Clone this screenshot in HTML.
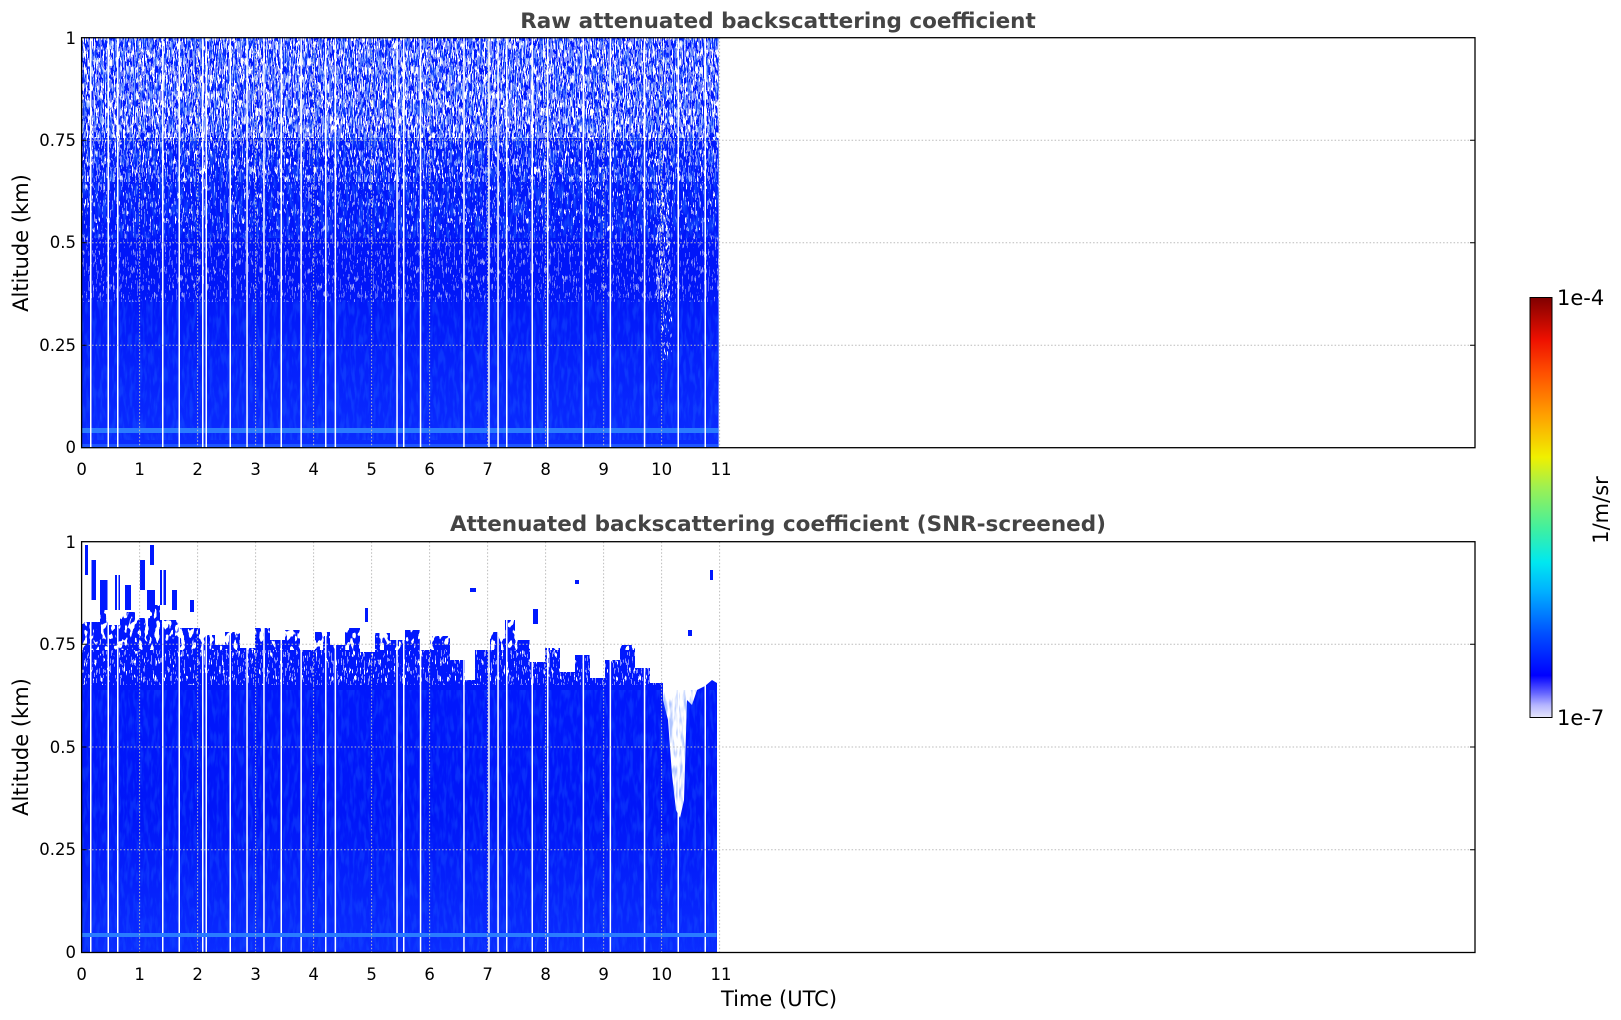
<!DOCTYPE html>
<html><head><meta charset="utf-8"><style>
html,body{margin:0;padding:0;background:#fff;width:1621px;height:1020px;overflow:hidden}
svg{display:block}
text{font-family:"DejaVu Sans","Liberation Sans",sans-serif}
</style></head><body>
<svg width="1621" height="1020" viewBox="0 0 1621 1020" xmlns="http://www.w3.org/2000/svg">
<defs>
<filter id="nd" x="0" y="0" width="100%" height="100%" color-interpolation-filters="sRGB">
<feTurbulence type="fractalNoise" baseFrequency="0.9 0.12" numOctaves="2" seed="3"/>
<feColorMatrix type="matrix" values="0 0 0 0 1 0 0 0 0 1 0 0 0 0 1 30 0 0 0 -14.7"/>
</filter>
<filter id="nm" x="0" y="0" width="100%" height="100%" color-interpolation-filters="sRGB">
<feTurbulence type="fractalNoise" baseFrequency="0.9 0.12" numOctaves="2" seed="7"/>
<feColorMatrix type="matrix" values="0 0 0 0 1 0 0 0 0 1 0 0 0 0 1 30 0 0 0 -17"/>
</filter>
<filter id="ns" x="0" y="0" width="100%" height="100%" color-interpolation-filters="sRGB">
<feTurbulence type="fractalNoise" baseFrequency="0.9 0.12" numOctaves="2" seed="11"/>
<feColorMatrix type="matrix" values="0 0 0 0 1 0 0 0 0 1 0 0 0 0 1 30 0 0 0 -19"/>
</filter>
<filter id="bm" x="0" y="0" width="100%" height="100%" color-interpolation-filters="sRGB">
<feTurbulence type="fractalNoise" baseFrequency="0.2 0.1" numOctaves="2" seed="9"/>
<feColorMatrix type="matrix" values="0 0 0 0 1 0 0 0 0 1 0 0 0 0 1 30 0 0 0 -16.5"/>
</filter>
<filter id="nb" x="0" y="0" width="100%" height="100%" color-interpolation-filters="sRGB">
<feTurbulence type="fractalNoise" baseFrequency="0.3 0.06" numOctaves="2" seed="5"/>
<feColorMatrix type="matrix" values="0 0 0 0 0.1 0 0 0 0 0.35 0 0 0 0 1 4 0 0 0 -1.8"/>
</filter>
<linearGradient id="base" x1="0" y1="0" x2="0" y2="1">
<stop offset="0" stop-color="#0018ff"/><stop offset="0.6" stop-color="#0016f8"/><stop offset="1" stop-color="#0a2cff"/>
</linearGradient>
<linearGradient id="cb" x1="0" y1="1" x2="0" y2="0">
<stop offset="0" stop-color="#e6e6fa"/><stop offset="0.03" stop-color="#b3b3ff"/><stop offset="0.06" stop-color="#6060ff"/>
<stop offset="0.1" stop-color="#0000ff"/><stop offset="0.2" stop-color="#0050ff"/><stop offset="0.3" stop-color="#00b0ff"/>
<stop offset="0.37" stop-color="#00e8f0"/><stop offset="0.45" stop-color="#40f0a0"/><stop offset="0.55" stop-color="#a0f050"/>
<stop offset="0.62" stop-color="#f0f000"/><stop offset="0.72" stop-color="#ffa000"/><stop offset="0.82" stop-color="#ff5000"/>
<stop offset="0.9" stop-color="#ee1000"/><stop offset="1" stop-color="#800000"/>
</linearGradient>
</defs>

<text x="778" y="28" text-anchor="middle" font-weight="bold" font-size="21.5" fill="#444">Raw attenuated backscattering coefficient</text>
<text x="778" y="531" text-anchor="middle" font-weight="bold" font-size="21.5" fill="#444">Attenuated backscattering coefficient (SNR-screened)</text>

<!-- TOP PLOT -->
<g>
<rect x="81.6" y="37.7" width="637" height="410" fill="url(#base)"/>
<rect x="81.6" y="37.7" width="637" height="100" fill="#fff" filter="url(#nd)"/>
<rect x="81.6" y="137" width="637" height="45" fill="#fff" filter="url(#nm)"/>
<rect x="81.6" y="182" width="637" height="50" fill="#fff" filter="url(#ns)"/>
<rect x="81.6" y="232" width="637" height="70" fill="#fff" filter="url(#ns)" opacity="0.6"/>
<rect x="81.6" y="300" width="637" height="140" fill="#fff" filter="url(#nb)" opacity="0.4"/>
<rect x="81.6" y="37.7" width="637" height="200" fill="#fff" filter="url(#nb)" opacity="0.6"/>
<rect x="656" y="170" width="14" height="130" fill="#fff" filter="url(#nm)"/>
<rect x="662" y="300" width="10" height="60" fill="#fff" filter="url(#ns)"/>
<rect x="81.6" y="428" width="637" height="5" fill="#2a7cff"/>
<rect x="81.6" y="444" width="637" height="3" fill="#1f55ff"/>
<g fill="#fff">
<rect x="90" y="37.7" width="1.5" height="410"/><rect x="107.5" y="37.7" width="1.5" height="410"/><rect x="117" y="37.7" width="1.5" height="410"/>
<rect x="162" y="37.7" width="1.5" height="410"/><rect x="178.5" y="37.7" width="1.5" height="410"/><rect x="202" y="37.7" width="1.5" height="410"/>
<rect x="205.5" y="37.7" width="1.5" height="410"/><rect x="229.5" y="37.7" width="1.5" height="410"/><rect x="246.3" y="37.7" width="1.5" height="410"/>
<rect x="263.2" y="37.7" width="1.5" height="410"/><rect x="280.5" y="37.7" width="1.5" height="410"/><rect x="300.4" y="37.7" width="1.5" height="410"/>
<rect x="325" y="37.7" width="1.5" height="410"/><rect x="334.6" y="37.7" width="1.5" height="410"/><rect x="396.3" y="37.7" width="1.5" height="410"/>
<rect x="403" y="37.7" width="1.5" height="410"/><rect x="419.8" y="37.7" width="1.5" height="410"/><rect x="463.2" y="37.7" width="1.5" height="410"/>
<rect x="488.2" y="37.7" width="1.5" height="410"/><rect x="497.3" y="37.7" width="1.5" height="410"/><rect x="506" y="37.7" width="1.5" height="410"/>
<rect x="531.5" y="37.7" width="1.5" height="410"/><rect x="547" y="37.7" width="1.5" height="410"/><rect x="582.6" y="37.7" width="1.5" height="410"/>
<rect x="609.6" y="37.7" width="1.5" height="410"/><rect x="643.8" y="37.7" width="1.5" height="410"/><rect x="677.5" y="37.7" width="1.5" height="410"/>
<rect x="704.5" y="37.7" width="1.5" height="410"/>
</g>
<g stroke="#bbb" stroke-width="1" stroke-dasharray="1.5,2" fill="none">
<path d="M81.6 140.2H1475M81.6 242.7H1475M81.6 345.2H1475"/>
<path d="M139.6 37.7V447.7M197.6 37.7V447.7M255.6 37.7V447.7M313.6 37.7V447.7M371.6 37.7V447.7M429.6 37.7V447.7M487.6 37.7V447.7M545.6 37.7V447.7M603.6 37.7V447.7M661.6 37.7V447.7M719.6 37.7V447.7"/>
</g>
<rect x="81.6" y="37.7" width="1393.4" height="410" fill="none" stroke="#000" stroke-width="1.3"/>
<g stroke="#000" stroke-width="1">
<path d="M81.6 140.2h5M81.6 242.7h5M81.6 345.2h5M1475 140.2h-5M1475 242.7h-5M1475 345.2h-5"/>
</g>
</g>

<!-- BOTTOM PLOT -->
<g>
<polygon fill="url(#base)" points="81.7,622 100,622 100,610 108,610 108,625 120,625 120,612 135,612 135,618 150,618 150,605 160,605 160,620 180,620 180,628 200,628 200,635 215,635 215,645 225,645 225,632 240,632 240,648 255,648 255,628 270,628 270,640 285,640 285,630 300,630 300,650 315,650 315,632 330,632 330,645 345,645 345,628 360,628 360,652 375,652 375,633 390,633 390,640 405,640 405,630 420,630 420,650 430,650 430,636 450,636 450,660 465,660 465,680 475,680 475,650 490,650 490,632 505,632 505,620 515,620 515,640 530,640 530,662 545,662 545,648 560,648 560,672 575,672 575,655 590,655 590,678 605,678 605,660 620,660 620,645 635,645 635,668 650,668 650,683 663,683 663,700 668,720 672,775 676,810 680,818 684,800 687,700 692,705 697,690 705,686 712,680 717,683 717,952.5 81.7,952.5"/>
<rect x="81.7" y="600" width="581" height="50" fill="#fff" filter="url(#bm)"/>
<rect x="81.7" y="650" width="581" height="35" fill="#fff" filter="url(#ns)"/>
<rect x="81.7" y="690" width="635" height="260" fill="#fff" filter="url(#nb)" opacity="0.35"/>
<g fill="#0018ff">
<rect x="90" y="560" width="6" height="40"/><rect x="100" y="580" width="8" height="30"/><rect x="115" y="575" width="5" height="35"/>
<rect x="125" y="585" width="6" height="25"/><rect x="140" y="560" width="5" height="30"/><rect x="150" y="545" width="4" height="20"/>
<rect x="160" y="570" width="6" height="35"/><rect x="172" y="590" width="5" height="20"/><rect x="85" y="545" width="3" height="30"/>
<rect x="147" y="590" width="8" height="20"/><rect x="190" y="600" width="4" height="12"/><rect x="365" y="608" width="3" height="14"/>
<rect x="470" y="588" width="6" height="4"/><rect x="533" y="609" width="5" height="15"/><rect x="575" y="580" width="4" height="4"/>
<rect x="710" y="570" width="3" height="10"/><rect x="688" y="630" width="4" height="6"/>
</g>
<g fill="#fff">
<rect x="90" y="541.7" width="1.5" height="411"/><rect x="107.5" y="541.7" width="1.5" height="411"/><rect x="117" y="541.7" width="1.5" height="411"/>
<rect x="162" y="541.7" width="1.5" height="411"/><rect x="178.5" y="541.7" width="1.5" height="411"/><rect x="202" y="541.7" width="1.5" height="411"/>
<rect x="205.5" y="541.7" width="1.5" height="411"/><rect x="229.5" y="541.7" width="1.5" height="411"/><rect x="246.3" y="541.7" width="1.5" height="411"/>
<rect x="263.2" y="541.7" width="1.5" height="411"/><rect x="280.5" y="541.7" width="1.5" height="411"/><rect x="300.4" y="541.7" width="1.5" height="411"/>
<rect x="325" y="541.7" width="1.5" height="411"/><rect x="334.6" y="541.7" width="1.5" height="411"/><rect x="396.3" y="541.7" width="1.5" height="411"/>
<rect x="403" y="541.7" width="1.5" height="411"/><rect x="419.8" y="541.7" width="1.5" height="411"/><rect x="463.2" y="541.7" width="1.5" height="411"/>
<rect x="488.2" y="541.7" width="1.5" height="411"/><rect x="497.3" y="541.7" width="1.5" height="411"/><rect x="506" y="541.7" width="1.5" height="411"/>
<rect x="531.5" y="541.7" width="1.5" height="411"/><rect x="547" y="541.7" width="1.5" height="411"/><rect x="582.6" y="541.7" width="1.5" height="411"/>
<rect x="609.6" y="541.7" width="1.5" height="411"/><rect x="643.8" y="541.7" width="1.5" height="411"/><rect x="677.5" y="541.7" width="1.5" height="411"/>
<rect x="704.5" y="541.7" width="1.5" height="411"/>
</g>
<rect x="81.7" y="933" width="635" height="4" fill="#2a7cff"/>
<g stroke="#bbb" stroke-width="1" stroke-dasharray="1.5,2" fill="none">
<path d="M81.6 644.3H1475M81.6 747H1475M81.6 849.7H1475"/>
<path d="M139.6 541.7V952.5M197.6 541.7V952.5M255.6 541.7V952.5M313.6 541.7V952.5M371.6 541.7V952.5M429.6 541.7V952.5M487.6 541.7V952.5M545.6 541.7V952.5M603.6 541.7V952.5M661.6 541.7V952.5M719.6 541.7V952.5"/>
</g>
<rect x="81.6" y="541.7" width="1393.4" height="410.8" fill="none" stroke="#000" stroke-width="1.3"/>
<g stroke="#000" stroke-width="1">
<path d="M81.6 644.3h5M81.6 747h5M81.6 849.7h5M1475 644.3h-5M1475 747h-5M1475 849.7h-5"/>
</g>
</g>

<g font-size="16.5" fill="#000" font-family="Liberation Sans, sans-serif">
<g text-anchor="end">
<text x="76" y="44">1</text><text x="76" y="146">0.75</text><text x="76" y="248">0.5</text><text x="76" y="351">0.25</text><text x="76" y="453">0</text>
<text x="76" y="548">1</text><text x="76" y="650">0.75</text><text x="76" y="753">0.5</text><text x="76" y="855">0.25</text><text x="76" y="958">0</text>
</g>
<g text-anchor="middle">
<text x="81.6" y="475">0</text><text x="139.6" y="475">1</text><text x="197.6" y="475">2</text><text x="255.6" y="475">3</text><text x="313.6" y="475">4</text><text x="371.6" y="475">5</text><text x="429.6" y="475">6</text><text x="487.6" y="475">7</text><text x="545.6" y="475">8</text><text x="603.6" y="475">9</text><text x="661.6" y="475">10</text><text x="721" y="475">11</text>
<text x="81.6" y="980">0</text><text x="139.6" y="980">1</text><text x="197.6" y="980">2</text><text x="255.6" y="980">3</text><text x="313.6" y="980">4</text><text x="371.6" y="980">5</text><text x="429.6" y="980">6</text><text x="487.6" y="980">7</text><text x="545.6" y="980">8</text><text x="603.6" y="980">9</text><text x="661.6" y="980">10</text><text x="721" y="980">11</text>
</g>
</g>
<text transform="translate(28,243) rotate(-90)" text-anchor="middle" font-size="21">Altitude (km)</text>
<text transform="translate(28,747) rotate(-90)" text-anchor="middle" font-size="21">Altitude (km)</text>
<text x="779" y="1006" text-anchor="middle" font-size="21">Time (UTC)</text>

<rect x="1530" y="297.5" width="22" height="420" fill="url(#cb)" stroke="#000" stroke-width="1"/>
<text x="1557" y="305" font-size="21">1e-4</text>
<text x="1557" y="725" font-size="21">1e-7</text>
<text transform="translate(1608,510) rotate(-90)" text-anchor="middle" font-size="21">1/m/sr</text>
</svg>
</body></html>
